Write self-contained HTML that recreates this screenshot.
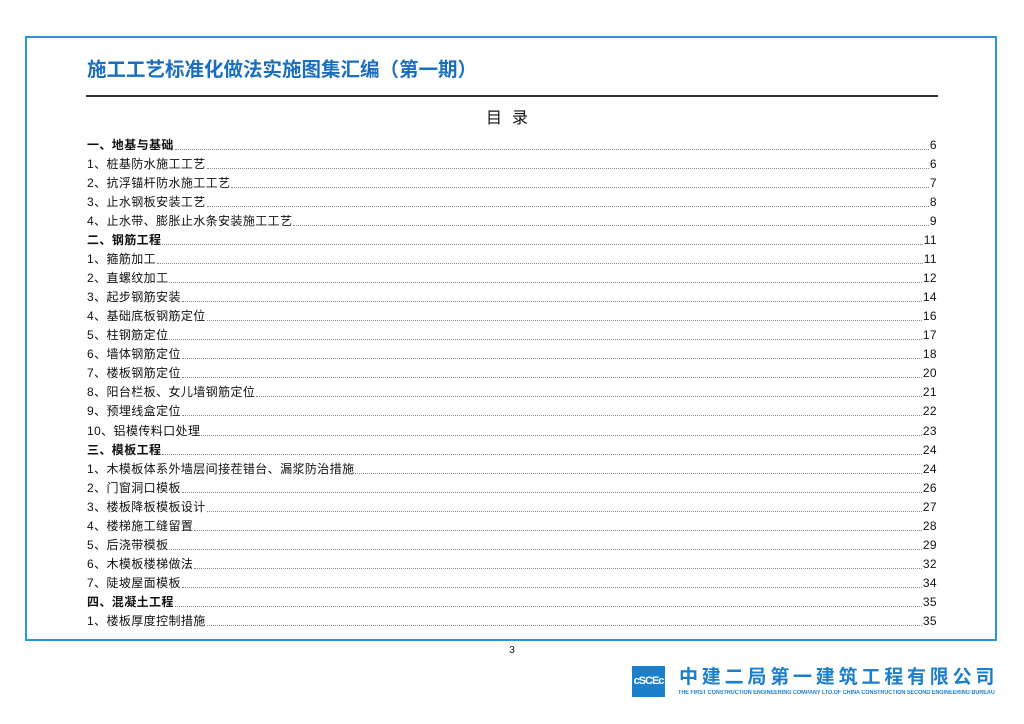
<!DOCTYPE html>
<html><head><meta charset="utf-8"><style>
*{margin:0;padding:0;box-sizing:border-box}
body{width:1024px;height:724px;background:#fff;position:relative;overflow:hidden;font-family:"Liberation Sans","Noto Sans CJK SC",sans-serif;color:#111}
.frame{position:absolute;left:25px;top:36px;width:972px;height:605px;border:2px solid #2a96d6}
.title{position:absolute;left:87px;top:53px;font-size:19.5px;font-weight:bold;color:#1a6fc0;letter-spacing:0px;white-space:nowrap}
.hr{position:absolute;left:86px;top:95px;width:852px;height:2px;background:#333}
.mulu{position:absolute;left:0;width:1024px;top:104px;text-align:center;font-size:16px;letter-spacing:10px}
.toc{position:absolute;left:87px;top:134px;width:850px}
.r{display:flex;height:19.04px;align-items:flex-end;font-size:12px;line-height:15px;letter-spacing:0.4px}
.r .l{white-space:nowrap}
.r .d{flex:1;border-bottom:1px dotted #888;margin:0 1px 3px 1px}
.r .n{white-space:nowrap}
.b .l{font-weight:bold}
.pn{position:absolute;left:0;width:1024px;top:645px;text-align:center;font-size:10px}
.logo{position:absolute;left:632px;top:666px;width:33px;height:31px;background:#1b7fcc;color:#fff;font-size:11px;font-weight:bold;text-align:center;line-height:31px;letter-spacing:-1px}
.cn{position:absolute;left:679px;top:662px;font-size:19px;font-weight:bold;color:#1b7fcc;letter-spacing:3.8px;white-space:nowrap}
.en{position:absolute;left:678px;top:690px;font-size:6px;font-weight:bold;color:#1b7fcc;white-space:nowrap;transform:scaleX(0.91);transform-origin:left}
</style></head><body>
<div class="frame"></div>
<div class="title">施工工艺标准化做法实施图集汇编（第一期）</div>
<div class="hr"></div>
<div class="mulu">目录</div>
<div class="toc">
<div class="r b"><span class="l">一、地基与基础</span><span class="d"></span><span class="n">6</span></div>
<div class="r"><span class="l">1、桩基防水施工工艺</span><span class="d"></span><span class="n">6</span></div>
<div class="r"><span class="l">2、抗浮锚杆防水施工工艺</span><span class="d"></span><span class="n">7</span></div>
<div class="r"><span class="l">3、止水钢板安装工艺</span><span class="d"></span><span class="n">8</span></div>
<div class="r"><span class="l">4、止水带、膨胀止水条安装施工工艺</span><span class="d"></span><span class="n">9</span></div>
<div class="r b"><span class="l">二、钢筋工程</span><span class="d"></span><span class="n">11</span></div>
<div class="r"><span class="l">1、箍筋加工</span><span class="d"></span><span class="n">11</span></div>
<div class="r"><span class="l">2、直螺纹加工</span><span class="d"></span><span class="n">12</span></div>
<div class="r"><span class="l">3、起步钢筋安装</span><span class="d"></span><span class="n">14</span></div>
<div class="r"><span class="l">4、基础底板钢筋定位</span><span class="d"></span><span class="n">16</span></div>
<div class="r"><span class="l">5、柱钢筋定位</span><span class="d"></span><span class="n">17</span></div>
<div class="r"><span class="l">6、墙体钢筋定位</span><span class="d"></span><span class="n">18</span></div>
<div class="r"><span class="l">7、楼板钢筋定位</span><span class="d"></span><span class="n">20</span></div>
<div class="r"><span class="l">8、阳台栏板、女儿墙钢筋定位</span><span class="d"></span><span class="n">21</span></div>
<div class="r"><span class="l">9、预埋线盒定位</span><span class="d"></span><span class="n">22</span></div>
<div class="r"><span class="l">10、铝模传料口处理</span><span class="d"></span><span class="n">23</span></div>
<div class="r b"><span class="l">三、模板工程</span><span class="d"></span><span class="n">24</span></div>
<div class="r"><span class="l">1、木模板体系外墙层间接茬错台、漏浆防治措施</span><span class="d"></span><span class="n">24</span></div>
<div class="r"><span class="l">2、门窗洞口模板</span><span class="d"></span><span class="n">26</span></div>
<div class="r"><span class="l">3、楼板降板模板设计</span><span class="d"></span><span class="n">27</span></div>
<div class="r"><span class="l">4、楼梯施工缝留置</span><span class="d"></span><span class="n">28</span></div>
<div class="r"><span class="l">5、后浇带模板</span><span class="d"></span><span class="n">29</span></div>
<div class="r"><span class="l">6、木模板楼梯做法</span><span class="d"></span><span class="n">32</span></div>
<div class="r"><span class="l">7、陡坡屋面模板</span><span class="d"></span><span class="n">34</span></div>
<div class="r b"><span class="l">四、混凝土工程</span><span class="d"></span><span class="n">35</span></div>
<div class="r"><span class="l">1、楼板厚度控制措施</span><span class="d"></span><span class="n">35</span></div>
</div>
<div class="pn">3</div>
<div class="logo">cSCEc</div>
<div class="cn">中建二局第一建筑工程有限公司</div>
<div class="en">THE FIRST CONSTRUCTION ENGINEERING COMPANY LTD.OF CHINA CONSTRUCTION SECOND ENGINEERING BUREAU</div>
</body></html>
